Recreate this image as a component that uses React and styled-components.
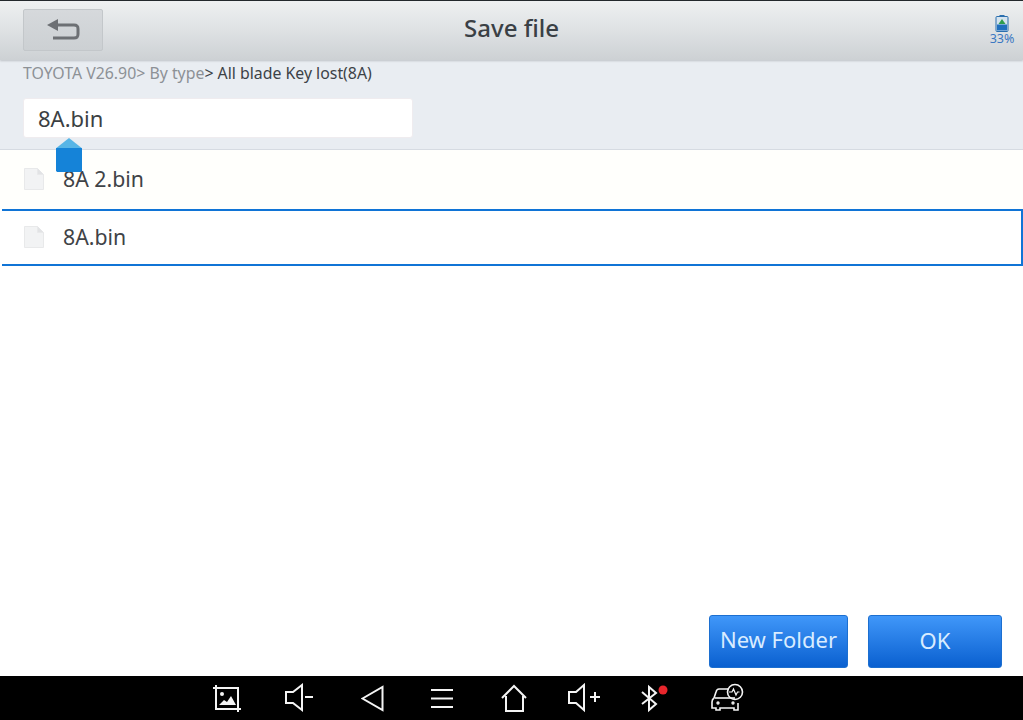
import styled, { createGlobalStyle } from "styled-components";

const GlobalStyle = createGlobalStyle`
  html, body {
    margin: 0;
    padding: 0;
    background: #fff;
  }
  body {
    font-family: "Noto Sans", "Open Sans", sans-serif;
  }
`;

const Screen = styled.div`
  width: 1023px;
  height: 720px;
  display: flex;
  flex-direction: column;
  position: relative;
  overflow: hidden;
  background: #fff;
`;

const Header = styled.header`
  height: 60px;
  flex: none;
  box-sizing: border-box;
  border-top: 1px solid #23282c;
  padding: 8px 2px 0 23px;
  display: grid;
  grid-template-columns: 80px 1fr 38px;
  align-items: start;
  background: linear-gradient(#eef0f1 0%, #e0e3e5 45%, #cdd1d4 100%);
  box-shadow: 0 1px 2px rgba(90, 95, 100, 0.3);
  position: relative;
`;

const BackButton = styled.button`
  width: 80px;
  height: 42px;
  padding: 0;
  display: flex;
  align-items: center;
  justify-content: center;
  background: linear-gradient(#d6d9dc, #ccd0d3);
  border: 1px solid #c3c7ca;
  border-radius: 2px;
`;

const Title = styled.h1`
  margin: 0;
  padding: 3px 63px 0 0;
  text-align: center;
  font-size: 24px;
  line-height: 32px;
  font-weight: 500;
  color: #3a4045;
`;

const Battery = styled.div`
  display: flex;
  flex-direction: column;
  align-items: center;
  padding-top: 6px;
  font-size: 12.500px;
  line-height: 13px;
  color: #3a78c2;
`;

const PathPanel = styled.section`
  height: 90px;
  flex: none;
  box-sizing: border-box;
  padding: 2px 23px 0;
  background: #e9edf2;
  border-bottom: 1px solid #d6dbe2;
`;

const Crumbs = styled.div`
  height: 23px;
  font-size: 15.850px;
  line-height: 23px;
  color: #8d9196;
`;

const CurrentCrumb = styled.span`
  color: #3c4247;
`;

const NameInput = styled.div`
  width: 390px;
  height: 40px;
  margin-top: 13px;
  box-sizing: border-box;
  padding-left: 14px;
  background: #fff;
  border-radius: 3px;
  border: 1px solid #efecef;
  font-size: 22px;
  line-height: 39px;
  color: #3b3f43;
`;

const CaretHandle = styled.div`
  position: absolute;
  left: 56px;
  top: 138px;
  width: 26px;
  height: 34px;
  background: linear-gradient(#57b5e6 0, #57b5e6 10px, #1583d8 10px, #1583d8 100%);
  clip-path: polygon(50% 0, 100% 30%, 100% 96%, 96% 100%, 4% 100%, 0 96%, 0 30%);
`;

const FileList = styled.ul`
  list-style: none;
  margin: 0;
  padding: 0;
  flex: 1;
  min-height: 0;
`;

const FileRow = styled.li`
  box-sizing: border-box;
  height: ${(p) => (p.$selected ? "57px" : "59px")};
  margin-left: ${(p) => (p.$selected ? "2px" : "0")};
  padding: 0 0 2px ${(p) => (p.$selected ? "22px" : "24px")};
  display: flex;
  align-items: center;
  gap: 19px;
  font-size: 21.300px;
  color: #3f4347;
  background: ${(p) => (p.$selected ? "#fff" : "#fffffc")};
  border: ${(p) => (p.$selected ? "2px solid #1074d6" : "none")};
  border-left: none;
`;

const Actions = styled.div`
  flex: none;
  height: 53px;
  margin-bottom: 8px;
  padding-right: 21px;
  display: flex;
  justify-content: flex-end;
  gap: 20px;
`;

const ActionButton = styled.button`
  width: ${(p) => p.$width}px;
  height: 53px;
  padding: 0 0 ${(p) => p.$lift}px;
  font-family: inherit;
  font-size: 22px;
  color: #d9ecff;
  background: linear-gradient(#4097f9, #0a60d0);
  border: 1px solid #1c6fd0;
  border-radius: 3px;
`;

const NavBar = styled.nav`
  flex: none;
  height: 44px;
  background: #000;
  display: flex;
  align-items: center;
  padding-left: 213px;
`;

const NavSlot = styled.div`
  width: ${(p) => p.$width}px;
  flex: none;
  height: 30px;
  display: flex;
  align-items: center;
`;

const BackIcon = () => (
  <svg width="36" height="24" viewBox="0 0 36 24" fill="none">
    <path d="M2 7 13 1v12z" fill="#6d7074" />
    <path d="M12 7h17c3 0 4 1 4 4v5c0 3-1 4-4 4H8" stroke="#6d7074" strokeWidth="3" />
  </svg>
);

const BatteryIcon = () => (
  <svg width="14" height="17" viewBox="0 0 14 17">
    <rect x="4.500" y="0" width="5" height="2" fill="#2b6fae" />
    <rect x="1" y="1.500" width="12" height="15" rx="1" fill="#d5e3ee" stroke="#2b6fae" />
    <path d="M7 4 10.500 9H3.500z" fill="#2f9d4d" />
    <rect x="2" y="9.500" width="10" height="6" fill="#1f6fbd" />
  </svg>
);

const FileIcon = () => (
  <svg width="20" height="22" viewBox="0 0 20 22">
    <path d="M.5.5h13l6 6v15H.5z" fill="#f2f3f4" stroke="#e8e9ea" />
    <path d="M13.500.5v6h6" fill="#e2e3e5" stroke="#e8e9ea" />
  </svg>
);

const NavIcon = ({ width = 30, children }) => (
  <svg
    width={width}
    height="30"
    viewBox={`0 0 ${width} 30`}
    fill="none"
    stroke="#f4f4f4"
    strokeWidth="2"
  >
    {children}
  </svg>
);

const App = () => {
  return (
    <Screen>
      <GlobalStyle />
      <Header>
        <BackButton aria-label="Back">
          <BackIcon />
        </BackButton>
        <Title>Save file</Title>
        <Battery>
          <BatteryIcon />
          33%
        </Battery>
      </Header>
      <PathPanel>
        <Crumbs>
          TOYOTA V26.90&gt; By type<CurrentCrumb>&gt; All blade Key lost(8A)</CurrentCrumb>
        </Crumbs>
        <NameInput>8A.bin</NameInput>
      </PathPanel>
      <CaretHandle />
      <FileList>
        <FileRow>
          <FileIcon />
          8A 2.bin
        </FileRow>
        <FileRow $selected>
          <FileIcon />
          8A.bin
        </FileRow>
      </FileList>
      <Actions>
        <ActionButton $width={139} $lift={5}>New Folder</ActionButton>
        <ActionButton $width={134} $lift={3}>OK</ActionButton>
      </Actions>
      <NavBar>
        <NavSlot $width={72}>
          <NavIcon>
            <path d="M0 5h26M3 2v24h25M25 5v24" />
            <circle cx="9" cy="11" r="2" fill="#f4f4f4" stroke="none" />
            <path d="M6 22l5-5 3 2 4-6 5 9z" fill="#f4f4f4" stroke="none" />
          </NavIcon>
        </NavSlot>
        <NavSlot $width={76}>
          <NavIcon>
            <path d="M1 9h7l9-7v25l-9-7H1z" />
            <path d="M20 14h8" />
          </NavIcon>
        </NavSlot>
        <NavSlot $width={70}>
          <NavIcon>
            <path d="M1.500 15.500 21.500 4v23z" />
          </NavIcon>
        </NavSlot>
        <NavSlot $width={70}>
          <NavIcon>
            <path d="M0 7h22M0 15.500h22M0 24h22" />
          </NavIcon>
        </NavSlot>
        <NavSlot $width={67}>
          <NavIcon>
            <path d="M1 15 13 3l12 12M5 13v15h17V13" />
          </NavIcon>
        </NavSlot>
        <NavSlot $width={73}>
          <NavIcon width={34}>
            <path d="M1 9h7l8-7v25l-8-7H1z" />
            <path d="M22 14h10M27 9v10" />
          </NavIcon>
        </NavSlot>
        <NavSlot $width={69}>
          <NavIcon>
            <path d="M1 9 15 21l-7 6V4l7 6L1 21" />
            <circle cx="22" cy="7" r="4.500" fill="#e8262c" stroke="none" />
          </NavIcon>
        </NavSlot>
        <NavSlot $width={36}>
          <NavIcon width={34}>
            <path d="M19 6H9C7 6 6.500 7 6 9l-2 6c-1.500 1-2 2-2 4v6h4v2h4v-2h14v2h4v-7" strokeWidth="1.600" />
            <path d="M5 15h20" strokeWidth="1.600" />
            <circle cx="8" cy="20" r="1" strokeWidth="1.400" />
            <circle cx="23" cy="20" r="1" strokeWidth="1.400" />
            <circle cx="25" cy="9" r="7.500" strokeWidth="1.600" />
            <path d="M19 9h3l1.500-3 2.500 6 1.500-3h2" strokeWidth="1.200" />
          </NavIcon>
        </NavSlot>
      </NavBar>
    </Screen>
  );
};

export default App;
